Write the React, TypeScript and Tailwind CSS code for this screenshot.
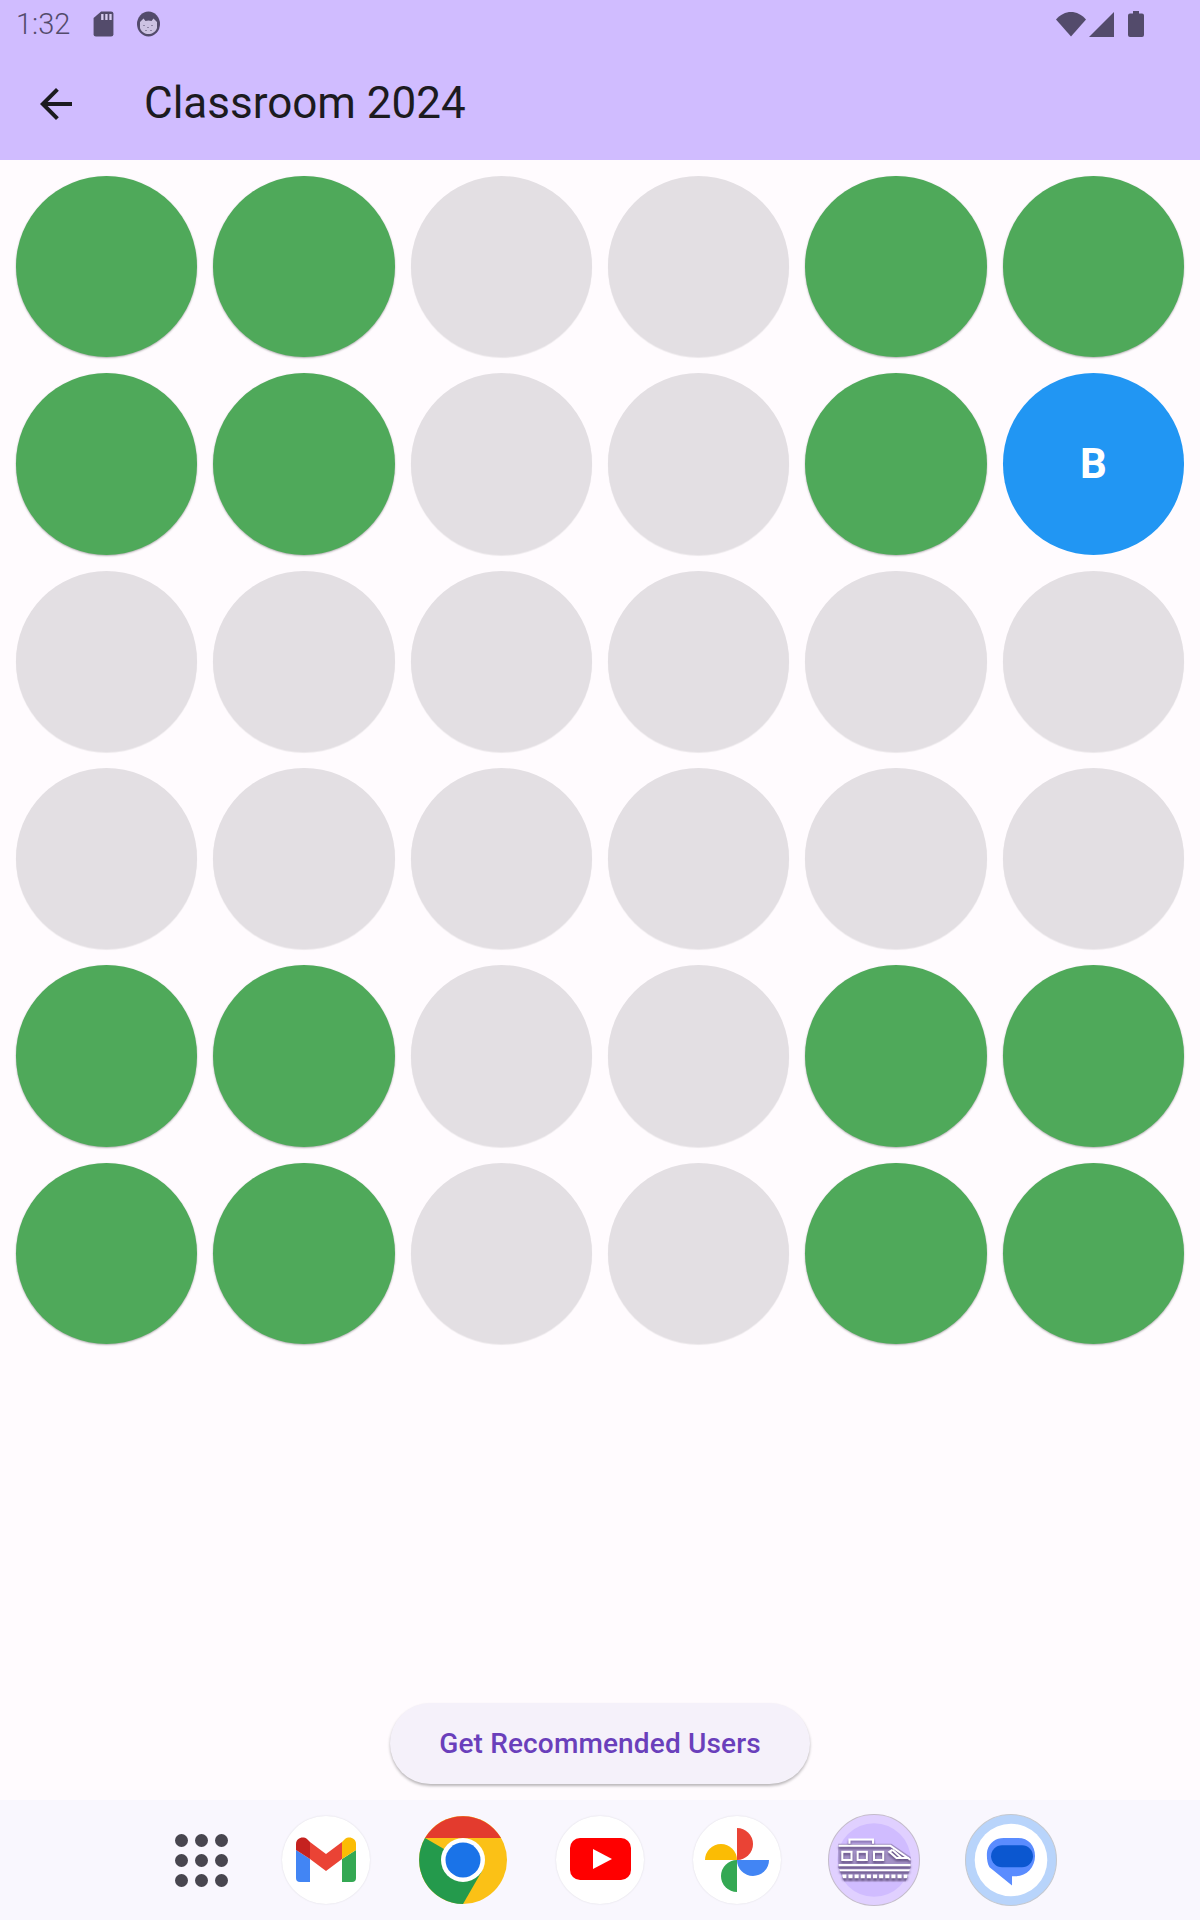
type Seat = "taken" | "free" | "mine";

const T: Seat = "taken";
const F: Seat = "free";
const M: Seat = "mine";

const seats: Seat[] = [
  T, T, F, F, T, T,
  T, T, F, F, T, M,
  F, F, F, F, F, F,
  F, F, F, F, F, F,
  T, T, F, F, T, T,
  T, T, F, F, T, T,
];

function SeatDot({ seat }: { seat: Seat }) {
  if (seat === "mine") {
    return (
      <div className="flex aspect-square items-center justify-center rounded-full bg-[#2196f3] pb-[2px] text-[42px] font-bold text-white">
        B
      </div>
    );
  }
  return (
    <div
      className={
        seat === "taken"
          ? "aspect-square rounded-full bg-[#4fa95a] shadow-[0_1px_2px_rgba(0,0,0,0.3)]"
          : "aspect-square rounded-full bg-[#e3dfe3] shadow-[0_1px_1px_rgba(0,0,0,0.08)]"
      }
    />
  );
}

function StatusBar() {
  return (
    <div className="relative flex h-12 items-center text-[#534b6b]">
      <span className="ml-4 w-[54px] text-[29px] font-light leading-none">1:32</span>
      <svg className="ml-[23px]" width="21" height="26" viewBox="0 0 18 26" preserveAspectRatio="none">
        <path d="M7 0.5H15.5A2 2 0 0 1 17.5 2.5V23.5A2 2 0 0 1 15.5 25.5H2.5A2 2 0 0 1 0.5 23.5V7Z" fill="currentColor" />
        <path d="M7 3h2v6H7zM10.5 3h2v6h-2zM14 3h2v6h-2z" fill="#d8cdf0" />
      </svg>
      <svg className="ml-[22px]" width="25" height="26" viewBox="0 0 24 26">
        <ellipse cx="12" cy="13" rx="11.5" ry="12.5" fill="currentColor" />
        <path d="M3.5 11 7 7.5 9 10c2-.8 4-.8 6 0l2-2.5 3.5 3.5v6c-1.5 4-5 6-8.5 6s-7-2-8.5-6Z" fill="#cdc3e2" />
        <path d="M7 14h1v1H7zM11 16h1v1h-1zM15 14h1v1h-1zM9 19h1v1H9zM14 19h1v1h-1z" fill="currentColor" />
      </svg>
      <div className="absolute right-[56px] top-[11px] flex items-start">
        <svg width="30" height="26" viewBox="0 0 30 26">
          <path d="M0 8.5C8.5 -1.5 21.5 -1.5 30 8.5L15 25.5Z" fill="currentColor" />
        </svg>
        <svg className="ml-[3px] mt-[1px]" width="25" height="25" viewBox="0 0 25 25">
          <path d="M25 0V25H0Z" fill="currentColor" />
        </svg>
        <svg className="ml-[14px]" width="16" height="26" viewBox="0 0 16 26">
          <path d="M5 0h6v2.5h3a2 2 0 0 1 2 2V24a2 2 0 0 1-2 2H2a2 2 0 0 1-2-2V4.5a2 2 0 0 1 2-2h3Z" fill="currentColor" />
        </svg>
      </div>
    </div>
  );
}

function GmailIcon() {
  return (
    <svg width="60" height="46" viewBox="0 0 60 46">
      <path d="M0 13V41a4 4 0 0 0 4 4H14V22Z" fill="#4285f4" />
      <path d="M46 22V45H56a4 4 0 0 0 4-4V13Z" fill="#34a853" />
      <path d="M46 5V22L60 13V7C60 1 53-1 49 2Z" fill="#fbbc04" />
      <path d="M14 22V5L30 17 46 5V22L30 34Z" fill="#ea4335" />
      <path d="M0 7V13L14 22V5L11 2C7-1 0 1 0 7Z" fill="#c5221f" />
    </svg>
  );
}

function ChromeIcon() {
  return (
    <svg width="88" height="88" viewBox="0 0 88 88">
      <circle cx="44" cy="44" r="44" fill="#fbc116" />
      <path d="M6 22A44 44 0 0 1 82 22H44Z" fill="#e33b2e" />
      <path d="M6 22A44 44 0 0 0 44 88L63 55 44 44Z" fill="#249a4c" />
      <circle cx="44" cy="44" r="22" fill="#fff" />
      <circle cx="44" cy="44" r="17.5" fill="#1a73e8" />
    </svg>
  );
}

function YoutubeIcon() {
  return (
    <svg className="-mt-[2px]" width="61" height="42" viewBox="0 0 61 42">
      <rect width="61" height="42" rx="10" fill="#ff0000" />
      <path d="M23 11 42 21 23 31Z" fill="#fff" />
    </svg>
  );
}

function PhotosIcon() {
  return (
    <svg width="64" height="64" viewBox="0 0 64 64">
      <path d="M32 0A16 16 0 0 1 32 32Z" fill="#ea4335" />
      <path d="M64 32A16 16 0 0 1 32 32Z" fill="#4285f4" />
      <path d="M32 64A16 16 0 0 1 32 32Z" fill="#34a853" />
      <path d="M0 32A16 16 0 0 1 32 32Z" fill="#fbbc04" />
    </svg>
  );
}

function TrainIcon() {
  return (
    <svg className="absolute inset-0" width="92" height="92" viewBox="0 0 90 90">
      <circle cx="45" cy="45" r="44.5" fill="#e0d0ff" stroke="#c4bccb" />
      <circle cx="45" cy="45" r="36" fill="#d0bcff" />
      <defs>
        <clipPath id="train-clip">
          <path d="M10 29H62L81 42V52L76 66H16L10 52Z" />
        </clipPath>
      </defs>
      <path d="M10 29H62L81 42V52L76 66H16L10 52Z" fill="#a391c6" />
      <g className="[filter:drop-shadow(0_2px_1px_rgba(70,50,100,0.75))]">
        <g clipPath="url(#train-clip)" fill="none" stroke="#fff" strokeWidth="2">
          <path d="M10 31H61L81 45" />
          <path d="M10 50H82M10 55H82" />
          <path d="M14 61H78" strokeWidth="3.5" strokeDasharray="4 2" />
        </g>
        <g fill="none" stroke="#fff" strokeWidth="2">
          <path d="M21 29V25H44V29" />
          <rect x="14" y="37" width="9" height="8" />
          <rect x="29" y="37" width="9" height="8" />
          <rect x="45" y="37" width="9" height="8" />
          <path d="M63 35 72 43H79M63 35 60 37 67 43H72" />
        </g>
      </g>
    </svg>
  );
}

function MessagesIcon() {
  return (
    <svg className="absolute inset-0" width="92" height="92" viewBox="0 0 90 90">
      <circle cx="45" cy="45" r="44.5" fill="#b8d4fb" stroke="#c4c8cf" />
      <circle cx="45" cy="45" r="35.5" fill="#fff" />
      <path d="M38 23.5H52C62 23.5 68.5 31 68.5 41C68.5 52 60 61 49 61H46V70L24 52C21 48 21 38 22 35C24 28 30 23.5 38 23.5Z" fill="#5a8cff" />
      <rect x="25.5" y="30.5" width="41" height="21.5" rx="10.75" fill="#0b57d0" />
    </svg>
  );
}

function Dock() {
  const whiteCircle = "flex h-[88px] w-[88px] shrink-0 items-center justify-center rounded-full bg-white shadow-[0_0_2px_rgba(0,0,0,0.12)]";
  return (
    <div className="flex h-[120px] items-center bg-[#f9f7fe]">
      <div className="ml-[175px] mr-[54px] grid w-[53px] grid-cols-3 gap-[7px]">
        {Array.from({ length: 9 }).map((_, i) => (
          <span key={i} className="h-[13px] w-[13px] rounded-full bg-[#48464f]" />
        ))}
      </div>
      <div className={whiteCircle}>
        <GmailIcon />
      </div>
      <div className="ml-[49px] h-[88px] w-[88px] shrink-0">
        <ChromeIcon />
      </div>
      <div className={`${whiteCircle} ml-[49px]`}>
        <YoutubeIcon />
      </div>
      <div className={`${whiteCircle} ml-[49px]`}>
        <PhotosIcon />
      </div>
      <div className="relative ml-[47px] h-[92px] w-[92px] shrink-0">
        <TrainIcon />
      </div>
      <div className="relative ml-[45px] h-[92px] w-[92px] shrink-0">
        <MessagesIcon />
      </div>
    </div>
  );
}

export default function App() {
  return (
    <div className="flex h-[1920px] w-[1200px] flex-col overflow-hidden bg-[#fffbfe] font-['Roboto',sans-serif]">
      <header className="bg-[#d0bcff]">
        <StatusBar />
        <div className="flex h-28 items-center">
          <svg className="ml-8 text-[#1c1b1f]" width="48" height="48" viewBox="0 0 24 24" fill="currentColor">
            <path d="M20 11H7.83l5.59-5.59L12 4l-8 8 8 8 1.41-1.41L7.83 13H20v-2z" />
          </svg>
          <h1 className="mb-[2px] ml-[64px] text-[44px] leading-none text-[#1c1b1f]">Classroom 2024</h1>
        </div>
      </header>

      <main className="flex flex-1 flex-col justify-between">
        <div className="grid grid-cols-6 gap-4 p-4">
          {seats.map((seat, i) => (
            <SeatDot key={i} seat={seat} />
          ))}
        </div>
        <div className="flex justify-center pb-4">
          <button className="h-[81px] w-[420px] rounded-full bg-[#f5f1fa] pt-px text-[28px] font-medium tracking-[0.15px] text-[#6a3fbb] shadow-[0_2px_3px_rgba(0,0,0,0.28)]">
            Get Recommended Users
          </button>
        </div>
      </main>

      <Dock />
    </div>
  );
}
